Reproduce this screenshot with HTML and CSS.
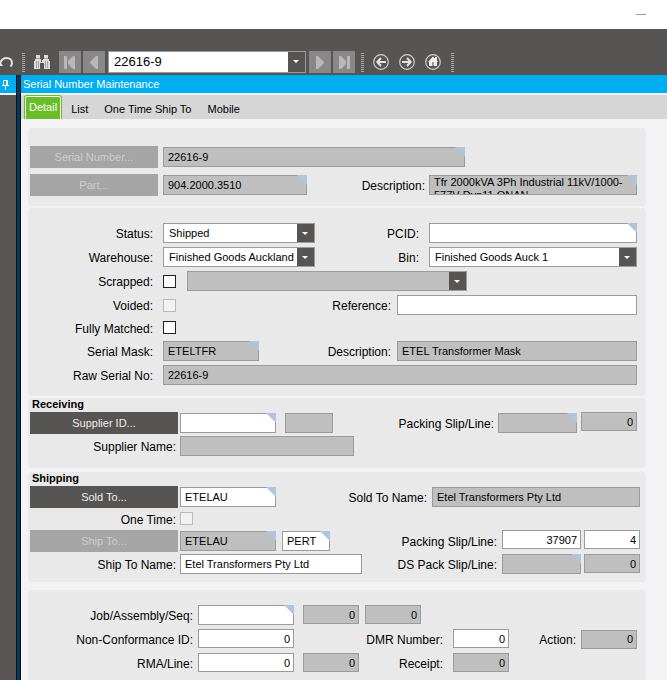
FILE: index.html
```html
<!DOCTYPE html>
<html lang="en">
<head>
<meta charset="utf-8">
<title>Serial Number Maintenance</title>
<link rel="stylesheet" href="styles.css">
</head>
<body>
<header class="titlebar">
  <button class="minimize" aria-label="Minimize"></button>
</header>

<div class="toolbar" role="toolbar" aria-label="Main">
  <button class="tool tool-undo" aria-label="Undo">
    <svg width="14" height="14" viewBox="0 0 14 14"><path d="M0 8C1.500 4.500 4 3 6.500 3C10 3 12 5.500 12 8C12 9.500 11.500 10.500 10.500 11.500" fill="none" stroke="#e4e4e4" stroke-width="2"/><path d="M0 6v5h3z" fill="#e4e4e4"/></svg>
  </button>
  <span class="grip"></span>
  <button class="tool tool-search" aria-label="Search">
    <svg width="16" height="14" viewBox="0 0 16 14"><path fill="#dcdcdc" d="M2 0h4v3H2zM10 0h4v3h-4zM1 4h6v1h2V4h6v2h1v8h-6V8H6v6H0V6h1z"/><path fill="#a3a2a1" d="M2 3h4v1H2zM10 3h4v1h-4zM2 6h1v7H2zM13 6h1v7h-1zM4 6h1v7H4zM11 6h1v7h-1z"/><path d="M7.500 5v2" stroke="#575553"/></svg>
  </button>
  <button class="nav" aria-label="First"><svg width="14" height="14" viewBox="0 0 14 14"><path fill="#b9b8b8" d="M1 1h3v13H1zM12 1v13h-2L5 9V6l5-5z"/></svg></button>
  <button class="nav" aria-label="Previous"><svg width="14" height="14" viewBox="0 0 14 14"><path fill="#b9b8b8" d="M11 1v13H9L3 8V7l6-6z"/></svg></button>
  <span class="pick record">
    <select aria-label="Record"><option>22616-9</option></select>
  </span>
  <button class="nav" aria-label="Next"><svg width="14" height="14" viewBox="0 0 14 14"><path fill="#b9b8b8" d="M3 1v13h2l6-6V7L5 1z"/></svg></button>
  <button class="nav" aria-label="Last"><svg width="14" height="14" viewBox="0 0 14 14"><path fill="#b9b8b8" d="M10 1h3v13h-3zM2 1v13h2l5-5V6L4 1z"/></svg></button>
  <span class="grip grip-nav"></span>
  <button class="tool round" aria-label="Back"><svg width="16" height="16" viewBox="0 0 16 16"><circle cx="8" cy="8" r="7.300" fill="none" stroke="#d0d0d0" stroke-width="1.200"/><path d="M13 8H4.500M8 4L4.300 8L8 12" fill="none" stroke="#e4e4e4" stroke-width="2"/></svg></button>
  <button class="tool round" aria-label="Forward"><svg width="16" height="16" viewBox="0 0 16 16"><circle cx="8" cy="8" r="7.300" fill="none" stroke="#d0d0d0" stroke-width="1.200"/><path d="M3 8h8.500M8 4l3.700 4L8 12" fill="none" stroke="#e4e4e4" stroke-width="2"/></svg></button>
  <button class="tool round" aria-label="Home"><svg width="16" height="16" viewBox="0 0 16 16"><circle cx="8" cy="8" r="7.300" fill="none" stroke="#d0d0d0" stroke-width="1.200"/><path fill="#efefef" d="M8 2.500L10 4.500V3h2v3.500l1 1.500h-1v4H4V8H3z"/><path fill="#999" d="M7 8h2v4H7z"/></svg></button>
  <span class="grip"></span>
</div>

<div class="workspace">
  <aside class="sidebar">
    <div class="sidebar-head">
      <button class="tool" aria-label="Pin panel"><svg width="9" height="11" viewBox="0 0 9 11"><path d="M2.500 6V1.500h4V6M5.500 1v5M1 6.500h7M4.500 7v4" fill="none" stroke="#fff"/></svg></button>
    </div>
  </aside>
  <div class="splitter"></div>

  <main class="content">
    <h1 class="heading">Serial Number Maintenance</h1>
    <nav class="tabs">
      <a href="#detail" class="tab tab-active">Detail</a>
      <a href="#list" class="tab">List</a>
      <a href="#shipto" class="tab">One Time Ship To</a>
      <a href="#mobile" class="tab">Mobile</a>
    </nav>

    <form class="form">
      <section class="panel panel-key">
        <div class="row">
          <button type="button" class="lookup" disabled>Serial Number...</button>
          <span class="cell w302 hint"><input aria-label="Serial Number" value="22616-9" readonly></span>
        </div>
        <div class="row">
          <button type="button" class="lookup" disabled>Part...</button>
          <span class="cell w144 hint"><input aria-label="Part" value="904.2000.3510" readonly></span>
          <span class="end">
            <label for="partdesc">Description:</label>
            <span class="cell w208 hint"><textarea id="partdesc" readonly>Tfr 2000kVA 3Ph Industrial 11kV/1000-577V Dyn11 ONAN</textarea></span>
          </span>
        </div>
      </section>

      <section class="panel panel-status">
        <div class="row">
          <label class="lead" for="status">Status:</label>
          <span class="pick w152"><select id="status"><option>Shipped</option></select></span>
          <span class="end end-wide">
            <label for="pcid">PCID:</label>
            <span class="cell w208 hint"><input id="pcid"></span>
          </span>
        </div>
        <div class="row">
          <label class="lead" for="warehouse">Warehouse:</label>
          <span class="pick w152"><select id="warehouse"><option>Finished Goods Auckland</option></select></span>
          <span class="end end-wide">
            <label for="bin">Bin:</label>
            <span class="pick w208"><select id="bin"><option>Finished Goods Auck 1</option></select></span>
          </span>
        </div>
        <div class="row">
          <label class="lead" for="scrapped">Scrapped:</label>
          <input type="checkbox" id="scrapped">
          <span class="pick w280 off"><select aria-label="Scrap reason" disabled><option></option></select></span>
        </div>
        <div class="row">
          <label class="lead" for="voided">Voided:</label>
          <input type="checkbox" id="voided" disabled>
          <span class="end end-mid">
            <label for="reference">Reference:</label>
            <span class="cell w240"><input id="reference"></span>
          </span>
        </div>
        <div class="row short">
          <label class="lead" for="matched">Fully Matched:</label>
          <input type="checkbox" id="matched">
        </div>
        <div class="row">
          <label class="lead" for="mask">Serial Mask:</label>
          <span class="cell w96 hint"><input id="mask" value="ETELTFR" readonly></span>
          <span class="end end-mid">
            <label for="maskdesc">Description:</label>
            <span class="cell w240"><input id="maskdesc" value="ETEL Transformer Mask" readonly></span>
          </span>
        </div>
        <div class="row">
          <label class="lead" for="raw">Raw Serial No:</label>
          <span class="cell grow"><input id="raw" value="22616-9" readonly></span>
        </div>
      </section>

      <section class="panel panel-party panel-receiving">
        <h2>Receiving</h2>
        <div class="row">
          <button type="button" class="lookup">Supplier ID...</button>
          <span class="cell w96 hint"><input aria-label="Supplier ID"></span>
          <span class="cell w48 apart"><input aria-label="Supplier code" readonly></span>
          <span class="end">
            <label for="rslip">Packing Slip/Line:</label>
            <span class="cell w79 hint"><input id="rslip" readonly></span>
            <span class="cell num w56"><input aria-label="Packing line" value="0" readonly></span>
          </span>
        </div>
        <div class="row">
          <label class="lead" for="supname">Supplier Name:</label>
          <span class="cell w174"><input id="supname" readonly></span>
        </div>
      </section>

      <section class="panel panel-party panel-shipping">
        <h2>Shipping</h2>
        <div class="row">
          <button type="button" class="lookup">Sold To...</button>
          <span class="cell w96 hint"><input aria-label="Sold To" value="ETELAU"></span>
          <span class="end">
            <label for="soldname">Sold To Name:</label>
            <span class="cell w208"><input id="soldname" value="Etel Transformers Pty Ltd" readonly></span>
          </span>
        </div>
        <div class="row short">
          <label class="lead" for="onetime">One Time:</label>
          <input type="checkbox" id="onetime" disabled>
        </div>
        <div class="row">
          <button type="button" class="lookup" disabled>Ship To...</button>
          <span class="cell w96 hint"><input aria-label="Ship To customer" value="ETELAU" readonly></span>
          <span class="cell w48 near hint"><input aria-label="Ship To" value="PERT"></span>
          <span class="end">
            <label for="sslip">Packing Slip/Line:</label>
            <span class="cell num w79"><input id="sslip" value="37907"></span>
            <span class="cell num w56"><input aria-label="Packing line" value="4"></span>
          </span>
        </div>
        <div class="row">
          <label class="lead" for="shipname">Ship To Name:</label>
          <span class="cell w182"><input id="shipname" value="Etel Transformers Pty Ltd"></span>
          <span class="end">
            <label for="dslip">DS Pack Slip/Line:</label>
            <span class="cell w79 hint"><input id="dslip" readonly></span>
            <span class="cell num w56"><input aria-label="DS pack line" value="0" readonly></span>
          </span>
        </div>
      </section>

      <section class="panel panel-job">
        <div class="row">
          <label class="lead" for="job">Job/Assembly/Seq:</label>
          <span class="cell w96 hint"><input id="job"></span>
          <span class="cell num w56 apart"><input aria-label="Assembly" value="0" readonly></span>
          <span class="cell num w56 near"><input aria-label="Sequence" value="0" readonly></span>
        </div>
        <div class="row">
          <label class="lead" for="nonconf">Non-Conformance ID:</label>
          <span class="cell num w96"><input id="nonconf" value="0"></span>
          <span class="end end-wide">
            <label for="dmr">DMR Number:</label>
            <span class="cell num w56"><input id="dmr" value="0"></span>
          </span>
          <span class="action">
            <label for="action">Action:</label>
            <span class="cell num w56"><input id="action" value="0" readonly></span>
          </span>
        </div>
        <div class="row">
          <label class="lead" for="rma">RMA/Line:</label>
          <span class="cell num w96"><input id="rma" value="0"></span>
          <span class="cell num w56 apart"><input aria-label="RMA line" value="0" readonly></span>
          <span class="end end-wide">
            <label for="receipt">Receipt:</label>
            <span class="cell num w56"><input id="receipt" value="0" readonly></span>
          </span>
          <span class="action"></span>
        </div>
      </section>
    </form>
  </main>
</div>
</body>
</html>
```
FILE: styles.css
```css
* { box-sizing: border-box; }

body {
  margin: 0;
  min-height: 100vh;
  display: flex;
  flex-direction: column;
  background: #f3f3f6;
  color: #000;
  font: 12px/14px "Liberation Sans", Arial, sans-serif;
}

button, input, select, textarea {
  margin: 0;
  font: inherit;
  color: inherit;
  border-radius: 0;
}

/* Window chrome */
.titlebar {
  height: 29px;
  background: #fff;
  display: flex;
  justify-content: flex-end;
  align-items: center;
  padding: 0 21px;
}
.minimize {
  width: 10px;
  height: 1px;
  padding: 0;
  border: 0;
  background: #999;
}

.toolbar {
  display: flex;
  align-items: center;
  gap: 2px;
  height: 46px;
  padding: 20px 0 0;
  background: #575553;
}
.tool {
  display: flex;
  padding: 0;
  border: 0;
  background: none;
}
.tool-undo { margin-right: 6px; }
.tool-search { margin: 0 7px; }
.round { margin-right: 8px; }
.grip {
  width: 3px;
  height: 19px;
  background: repeating-linear-gradient(#a9a8a7 0 1px, transparent 1px 2px);
}
.grip-nav { margin: 0 7px 0 4px; }
.nav {
  display: flex;
  align-items: center;
  justify-content: center;
  width: 22px;
  height: 22px;
  padding: 0;
  border: 0;
  background: #898787;
}

/* Drop-downs */
.pick {
  position: relative;
  flex: none;
  display: block;
  height: 20px;
}
.pick select {
  appearance: none;
  display: block;
  width: 100%;
  height: 100%;
  padding: 0 18px 0 5px;
  border: 1px solid #9b9b9b;
  background: #fff;
  color: #000;
  opacity: 1;
  font-size: 11px;
}
.pick::before {
  content: "";
  position: absolute;
  top: 1px;
  right: 1px;
  bottom: 1px;
  width: 17px;
  background: #575553;
  pointer-events: none;
}
.pick::after {
  content: "";
  position: absolute;
  top: 9px;
  right: 7px;
  border: solid transparent;
  border-width: 3px 3px 0;
  border-top-color: #fff;
  pointer-events: none;
}
.off select { background: #bfbfbf; }
.record {
  width: 198px;
  height: 22px;
  margin: 0 1px;
}
.record select { font-size: 13px; }

/* Work area */
.workspace {
  flex: 1;
  display: flex;
}
.sidebar {
  width: 16px;
  background: #5a5552;
}
.sidebar-head {
  display: flex;
  justify-content: center;
  align-items: center;
  height: 20px;
  padding: 0 5px 0 0;
  background: #00adef;
  border-bottom: 2px solid #f0f0f0;
}
.splitter {
  width: 5px;
  background: #003a5a;
  border: solid #061018;
  border-width: 0 1px;
}
.content {
  flex: 1;
  min-width: 0;
  display: flex;
  flex-direction: column;
}
.heading {
  margin: 0;
  height: 20px;
  padding: 0 2px;
  background: #00adef;
  border-bottom: 2px solid #f0f0f0;
  color: #fff;
  font-size: 11px;
  font-weight: normal;
  line-height: 18px;
}
.tabs {
  display: flex;
  height: 24px;
  padding: 0 3px;
  background: #d6d6d6;
}
.tab {
  padding: 3px 8px 0;
  color: #000;
  font-size: 11px;
  line-height: 23px;
  text-decoration: none;
}
.tab-active {
  margin-right: 1px;
  padding: 0 4px;
  border: 1px solid #69be28;
  border-bottom: 0;
  border-radius: 3px 3px 0 0;
  box-shadow: inset 0 1px #fff, inset 1px 0 #fff, inset -1px 0 #fff;
  background: #69be28;
  color: #fff;
}

/* Form panels */
.form {
  flex: 1;
  display: flex;
  flex-direction: column;
  padding: 9px 21px 0 7px;
}
.panel {
  display: flex;
  flex-direction: column;
  gap: 4px;
  margin-bottom: 2px;
  padding: 15px 9px 11px 2px;
  border-radius: 4px;
  background: #e9e9e9;
}
.panel-key { gap: 6px; padding-top: 18px; padding-bottom: 10px; }
.panel-party { gap: 2px; padding-top: 0; padding-bottom: 12px; }
.panel-receiving { margin-bottom: 4px; }
.panel-shipping { margin-bottom: 8px; padding-right: 6px; padding-bottom: 8px; }
.panel-job { flex: 1; margin-bottom: 0; padding-bottom: 8px; border-radius: 4px 4px 0 0; }

.panel h2 {
  margin: 0;
  padding: 0 2px;
  font-size: 11px;
  line-height: 12px;
}
.row {
  display: flex;
  align-items: center;
  min-height: 20px;
}
.short { min-height: 18px; }
.short input { margin-top: -1px; }
.row label {
  white-space: nowrap;
  padding: 2px 2px 0 0;
}
.row .lead {
  flex: none;
  width: 123px;
  margin-right: 10px;
  padding-right: 0;
  text-align: right;
}
.panel-party .lead { width: 146px; margin-right: 4px; }
.panel-job .lead { width: 163px; margin-right: 5px; }

.lookup {
  flex: none;
  width: 128px;
  height: 22px;
  margin-right: 5px;
  padding: 0;
  border: 0;
  background: #575553;
  color: #eee;
  font-size: 11px;
}
.lookup:disabled { background: #a5a5a5; color: #cdcdcd; }
.panel-party .lookup { width: 148px; margin-right: 2px; }

.end {
  display: flex;
  align-items: center;
  gap: 3px;
  margin-left: auto;
  align-self: stretch;
}
.panel-key .end, .panel-receiving .end { gap: 2px; }
.panel-receiving .num { margin-left: 2px; }
.end-wide { gap: 8px; }
.end-mid { gap: 4px; }
.action {
  display: flex;
  align-items: center;
  justify-content: flex-end;
  gap: 3px;
  width: 128px;
}
.action .num { align-self: center; }

/* Text fields */
.cell {
  position: relative;
  flex: none;
  display: block;
  height: 20px;
}
.cell input, .cell textarea {
  display: block;
  width: 100%;
  height: 100%;
  padding: 0 4px;
  border: 1px solid #9b9b9b;
  background: #fff;
  font-size: 11px;
}
.cell textarea {
  padding-top: 0;
  line-height: 13px;
  resize: none;
  overflow: hidden;
}
.cell input:read-only, .cell textarea:read-only { background: #bfbfbf; }
.hint::after {
  content: "";
  position: absolute;
  top: 0;
  right: 0;
  width: 10px;
  height: 10px;
  background: #b0c4de;
  clip-path: polygon(0 0, 100% 0, 100% 100%);
  pointer-events: none;
}
.num { height: 19px; align-self: flex-start; }
.num input { text-align: right; padding: 0 3px; }
.apart { margin-left: 9px; }
.near { margin-left: 6px; }
.grow { flex: 1; }
.w48 { width: 48px; }
.w56 { width: 56px; }
.w79 { width: 79px; }
.w96 { width: 96px; }
.w144 { width: 144px; }
.w152 { width: 152px; }
.w174 { width: 174px; }
.w182 { width: 182px; }
.w208 { width: 208px; }
.w240 { width: 240px; }
.w280 { width: 280px; margin-left: 11px; }
.w302 { width: 302px; }

input[type="checkbox"] {
  appearance: none;
  flex: none;
  width: 13px;
  height: 13px;
  border: 1px solid #222;
  background: #fff;
}
input[type="checkbox"]:checked { background: #575553; }
input[type="checkbox"]:disabled { border-color: #b9b9b9; background: #f2f2f2; }
```
